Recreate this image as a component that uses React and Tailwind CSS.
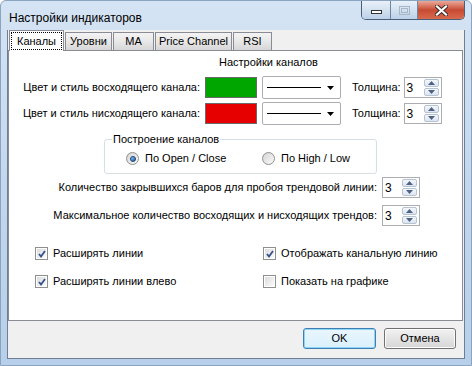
import { useState } from "react";

const FONT = { fontFamily: '"Liberation Sans", Arial, sans-serif' };

// --- маленькие контролы в стиле Windows 7 ---

function SpinBox({ value }) {
  return (
    <div className="relative flex h-[21px] w-[38px] items-center border border-[#abadb3] bg-white">
      <span className="pl-[2px] text-[12px] leading-none text-black">{value}</span>
      <div className="absolute right-[2px] top-[1px] flex flex-col gap-[1px]">
        <SpinBtn up />
        <SpinBtn />
      </div>
    </div>
  );
}

function SpinBtn({ up }) {
  return (
    <div className="flex h-[8px] w-[15px] items-center justify-center rounded-[2px] border border-[#b6c3d3] bg-gradient-to-b from-[#f5f7fa] to-[#dce5f0]">
      <svg width="7" height="4" viewBox="0 0 7 4">
        {up ? <path d="M0 4 L3.5 0 L7 4 Z" fill="#4d6185" /> : <path d="M0 0 L3.5 4 L7 0 Z" fill="#4d6185" />}
      </svg>
    </div>
  );
}

function LineCombo() {
  return (
    <div className="flex h-[23px] w-[79px] items-center rounded-[2px] border border-[#abadb3] bg-white pl-[4px] pr-[6px]">
      <div className="h-[1px] w-[54px] bg-black" />
      <div className="flex-1" />
      <svg width="7" height="4" viewBox="0 0 7 4">
        <path d="M0 0 L3.5 4 L7 0 Z" fill="#000" />
      </svg>
    </div>
  );
}

function CheckBox({ checked, label }) {
  return (
    <div className="flex items-center gap-[5px]">
      <div className="flex h-[13px] w-[13px] items-center justify-center border border-[#8e8f8f] bg-white p-[1px]">
        <div className="flex h-full w-full items-center justify-center bg-gradient-to-br from-[#dcdcdc] to-[#fbfbfb]">
          {checked && (
            <svg width="8" height="8" viewBox="0 0 8 8">
              <path d="M1 4 L3 6.5 L7 1" stroke="#34508f" strokeWidth="1.8" fill="none" />
            </svg>
          )}
        </div>
      </div>
      <span className="text-[11px] leading-[13px] text-black">{label}</span>
    </div>
  );
}

function Radio({ checked, label }) {
  return (
    <div className="flex items-center gap-[6px]">
      <div className="flex h-[13px] w-[13px] items-center justify-center rounded-full border border-[#8e8f8f] bg-gradient-to-br from-[#d4d4d4] to-[#fbfbfb]">
        {checked && <div className="h-[6px] w-[6px] rounded-full border border-[#1b3d6f] bg-gradient-to-br from-[#8fd0f7] to-[#1d5ea8]" />}
      </div>
      <span className="text-[11px] leading-[13px] text-black">{label}</span>
    </div>
  );
}

function Tab({ label, active, w }) {
  if (active) {
    return (
      <div className={`relative z-10 -mb-[1px] flex h-[21px] ${w} items-start justify-center border border-b-0 border-[#898c95] bg-white pt-[1px]`}>
        <div className="mx-[1px] flex h-[18px] w-full items-center justify-center border border-dotted border-black">
          <span className="text-[11px] leading-none">{label}</span>
        </div>
      </div>
    );
  }
  return (
    <div className={`mt-[2px] flex h-[18px] ${w} items-center justify-center border border-b-0 border-[#898c95] bg-gradient-to-b from-[#f3f3f3] via-[#e8e8e8] to-[#d6d6d6]`}>
      <span className="text-[11px] leading-none">{label}</span>
    </div>
  );
}

export default function App() {
  const [tab] = useState("Каналы");

  return (
    <div className="h-[366px] w-[472px] overflow-hidden bg-white" style={FONT}>
      <div className="flex h-full w-full flex-col rounded-t-[6px] border border-[#8aa3bf] bg-gradient-to-b from-[#d5e4f4] via-[#c3d7ee] to-[#b7cfea]">
        {/* заголовок окна */}
        <div className="flex h-[29px] items-start justify-between">
          <span className="pl-[8px] pt-[10px] text-[12px] leading-[14px] text-black">Настройки индикаторов</span>
          <div className="mr-[6px] flex h-[19px] overflow-hidden rounded-b-[5px] border border-t-0 border-[#4a5f78]">
            <div className="flex w-[29px] items-center justify-center border-r border-[#6f86a2] bg-gradient-to-b from-[#e9f1fa] via-[#d3e1f0] to-[#bcd0e7]">
              <div className="mt-[4px] h-[4px] w-[11px] border border-[#333] bg-white" />
            </div>
            <div className="flex w-[27px] items-center justify-center border-r border-[#6f86a2] bg-gradient-to-b from-[#e9f1fa] via-[#d3e1f0] to-[#bcd0e7]">
              <div className="h-[9px] w-[11px] border border-[#a7b6c8] p-[1px]">
                <div className="h-full w-full border border-[#a7b6c8]" />
              </div>
            </div>
            <div className="flex w-[46px] items-center justify-center bg-gradient-to-b from-[#e9a99a] via-[#c74a32] to-[#d86a4d]">
              <svg width="13" height="11" viewBox="0 0 13 11">
                <path d="M2 1.5 L11 9.5 M11 1.5 L2 9.5" stroke="#3a2a2a" strokeWidth="4" strokeLinecap="square" />
                <path d="M2 1.5 L11 9.5 M11 1.5 L2 9.5" stroke="#fff" strokeWidth="2.2" strokeLinecap="square" />
              </svg>
            </div>
          </div>
        </div>

        {/* клиентская область */}
        <div className="mx-[6px] flex h-[329px] flex-col border-x border-b border-[#6d7f94] bg-[#f0f0f0] text-black">
          <div className="flex h-[20px] items-start gap-[1px] pl-[1px]">
            <Tab label="Каналы" active={tab === "Каналы"} w="w-[55px]" />
            <Tab label="Уровни" w="w-[47px]" />
            <Tab label="MA" w="w-[41px]" />
            <Tab label="Price Channel" w="w-[77px]" />
            <Tab label="RSI" w="w-[39px]" />
          </div>

          <div className="mr-[1px] flex h-[271px] flex-col border border-[#898c95] bg-white">
            <div className="ml-[210px] mt-[5px] text-[11px] leading-[13px]">Настройки каналов</div>

            <div className="mt-[7px] flex h-[23px] items-center">
              <span className="w-[191px] text-right text-[11px]">Цвет и стиль восходящего канала:</span>
              <div className="ml-[5px] h-[21px] w-[52px] border border-[#6a6a6a] bg-[#00a600]" />
              <div className="ml-[5px]"><LineCombo /></div>
              <span className="ml-[11px] text-[11px]">Толщина:</span>
              <div className="ml-[3px]"><SpinBox value="3" /></div>
            </div>

            <div className="mt-[3px] flex h-[23px] items-center">
              <span className="w-[191px] text-right text-[11px]">Цвет и стиль нисходящего канала:</span>
              <div className="ml-[5px] h-[21px] w-[52px] border border-[#6a6a6a] bg-[#e60000]" />
              <div className="ml-[5px]"><LineCombo /></div>
              <span className="ml-[11px] text-[11px]">Толщина:</span>
              <div className="ml-[3px]"><SpinBox value="3" /></div>
            </div>

            <fieldset className="ml-[95px] mt-[8px] w-[273px] rounded-[3px] border border-[#d5dfe5] pb-[8px]">
              <legend className="ml-[7px] px-[1px] text-[11px] leading-[13px]">Построение каналов</legend>
              <div className="mt-[6px] flex pl-[21px]">
                <div className="w-[136px]"><Radio checked label="По Open / Close" /></div>
                <Radio label="По High / Low" />
              </div>
            </fieldset>

            <div className="mt-[3px] flex items-center justify-end gap-[5px] pr-[42px]">
              <span className="text-[11px]">Количество закрывшихся баров для пробоя трендовой линии:</span>
              <SpinBox value="3" />
            </div>
            <div className="mt-[7px] flex items-center justify-end gap-[5px] pr-[42px]">
              <span className="text-[11px]">Максимальное количество восходящих и нисходящих трендов:</span>
              <SpinBox value="3" />
            </div>

            <div className="mt-[21px] flex pl-[26px]">
              <div className="w-[228px]"><CheckBox checked label="Расширять линии" /></div>
              <CheckBox checked label="Отображать канальную линию" />
            </div>
            <div className="mt-[15px] flex pl-[26px]">
              <div className="w-[228px]"><CheckBox checked label="Расширять линии влево" /></div>
              <CheckBox label="Показать на графике" />
            </div>
          </div>

          <div className="flex flex-1 items-start justify-end gap-[8px] pr-[8px] pt-[7px]">
            <button className="h-[21px] w-[73px] rounded-[3px] border border-[#3c7fb1] bg-gradient-to-b from-[#eaf6fd] to-[#d9f0fc] text-[11px] shadow-[inset_0_0_0_1px_#8fd3f7]">OK</button>
            <button className="h-[21px] w-[72px] rounded-[3px] border border-[#707070] bg-gradient-to-b from-[#f2f2f2] to-[#d6d6d6] text-[11px] shadow-[inset_0_0_0_1px_#fcfcfc]">Отмена</button>
          </div>
        </div>
      </div>
    </div>
  );
}
